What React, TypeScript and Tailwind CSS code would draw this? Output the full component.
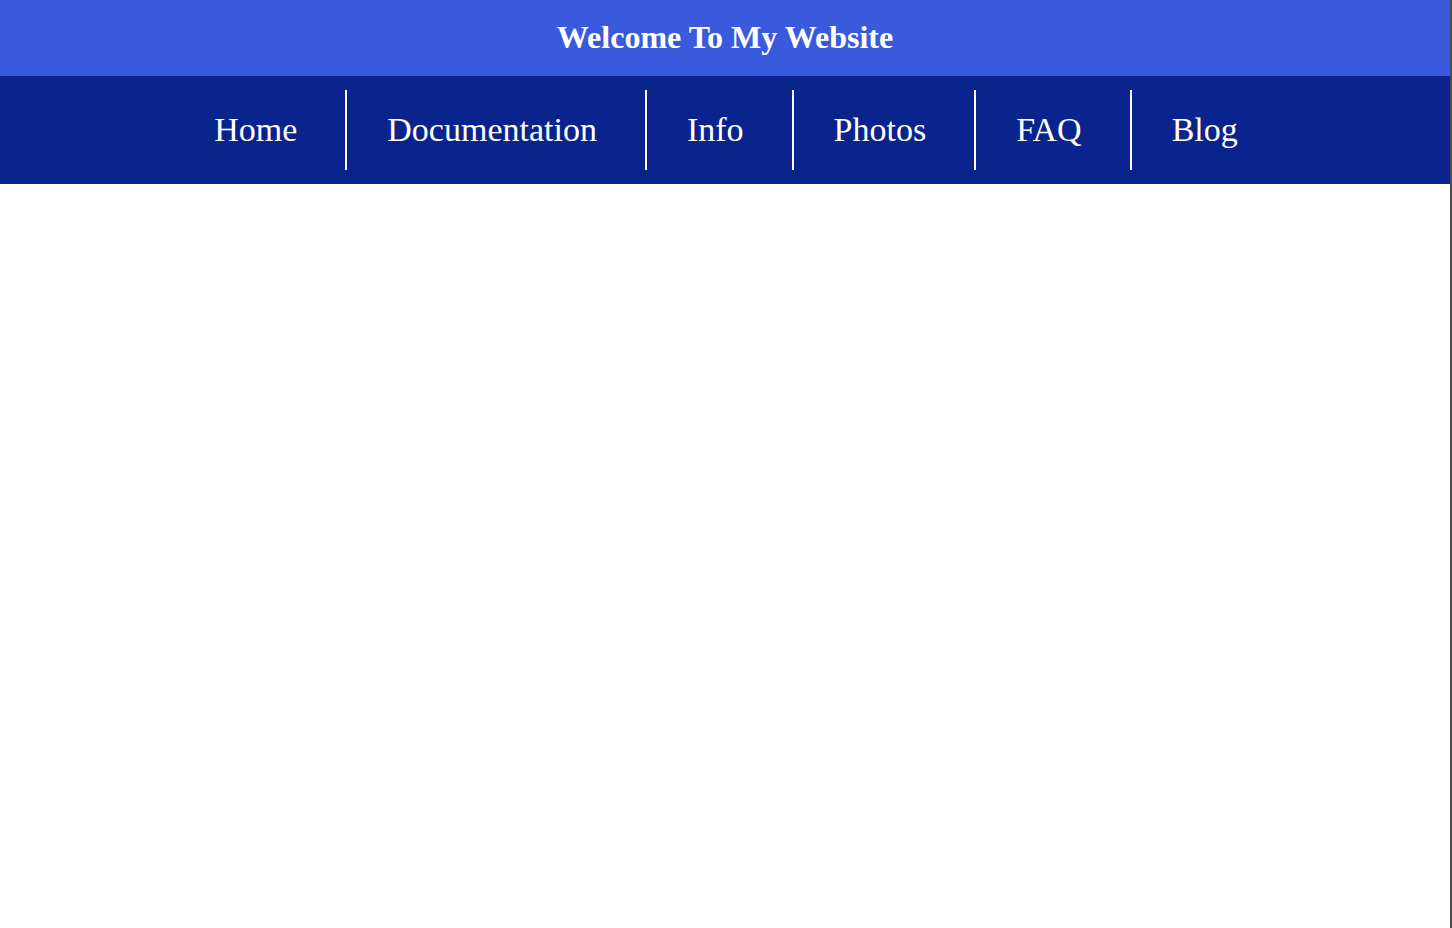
import React from 'react';

const links = ['Home', 'Documentation', 'Info', 'Photos', 'FAQ', 'Blog'];

export default function App() {
  return (
    <div
      className="min-h-screen bg-white border-r-2 border-[#4a4a4f]"
      style={{ fontFamily: '"Liberation Serif", "Times New Roman", serif' }}
    >
      <header className="h-[76px] bg-[#3a5add] flex items-center justify-center pb-[2px]">
        <h1 className="text-white font-bold text-[32px] leading-none">Welcome To My Website</h1>
      </header>

      <nav className="bg-[#0a238d] py-[14px] flex justify-center">
        <ul className="flex pl-[10px]">
          {links.map((l, i) => (
            <li
              key={l}
              className={`h-[80px] flex items-center pb-[2px] pl-[40px] pr-[48px] text-white text-[34px] ${
                i < links.length - 1 ? 'border-r-2 border-white' : ''
              }`}
            >
              {l}
            </li>
          ))}
        </ul>
      </nav>
    </div>
  );
}
